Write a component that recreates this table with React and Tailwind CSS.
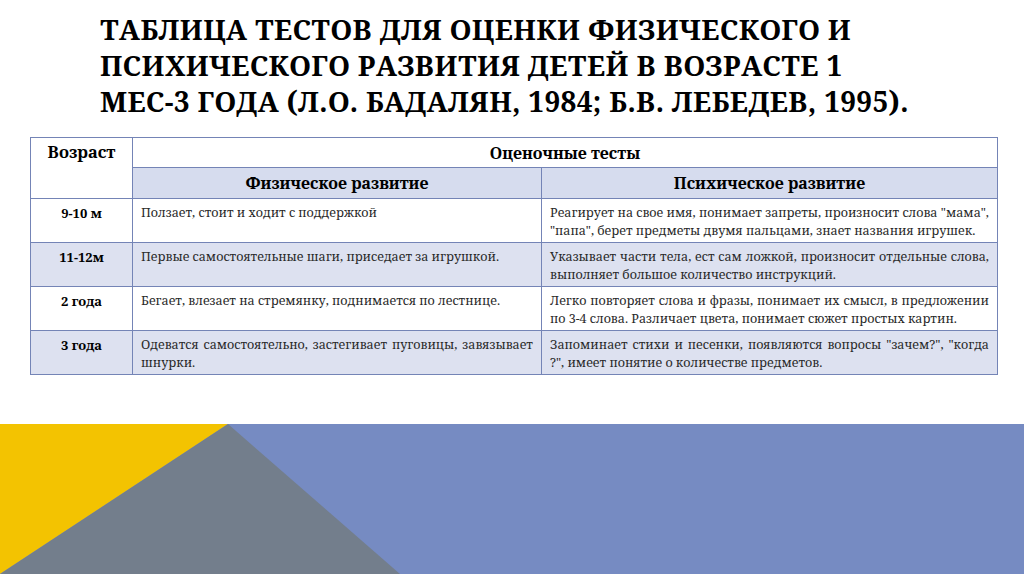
export default function App() {
  const rows = [
    {
      age: "9-10 м",
      phys: "Ползает, стоит и ходит с поддержкой",
      psych: 'Реагирует на свое имя, понимает запреты, произносит слова "мама", "папа", берет предметы двумя пальцами, знает названия игрушек.',
      shade: false,
    },
    {
      age: "11-12м",
      phys: "Первые самостоятельные шаги, приседает за игрушкой.",
      psych: "Указывает части тела, ест сам ложкой, произносит отдельные слова, выполняет большое количество инструкций.",
      shade: true,
    },
    {
      age: "2 года",
      phys: "Бегает, влезает на стремянку, поднимается по лестнице.",
      psych: "Легко повторяет слова и фразы, понимает их смысл, в предложении по 3-4 слова. Различает цвета, понимает сюжет простых картин.",
      shade: false,
    },
    {
      age: "3 года",
      phys: "Одеватся самостоятельно, застегивает пуговицы, завязывает шнурки.",
      psych: 'Запоминает стихи и песенки, появляются вопросы "зачем?", "когда ?", имеет понятие о количестве предметов.',
      shade: true,
    },
  ];
  const bd = "border border-[#7484b6]";
  return (
    <div
      className="w-[1024px] h-[574px] bg-white overflow-hidden flex flex-col text-black"
      style={{ fontFamily: '"Noto Serif", "DejaVu Serif", serif' }}
    >
      <div className="pl-[100px] pt-[11px] h-[137px]">
        <h1 className="text-[28px] leading-[36px] font-bold uppercase tracking-[0.3px]">
          Таблица тестов для оценки физического и
          <br />
          психического развития детей в возрасте 1
          <br />
          мес-3 года (Л.О. Бадалян, 1984; Б.В. Лебедев, 1995).
        </h1>
      </div>
      <div className="pl-[30px]">
        <table className="border-collapse w-[967px] table-fixed">
          <colgroup>
            <col className="w-[102px]" />
            <col className="w-[409px]" />
            <col className="w-[456px]" />
          </colgroup>
          <thead>
            <tr className="h-[30px]">
              <th rowSpan={2} className={`${bd} font-bold align-top pt-[4px] text-[16.5px] leading-[20px] bg-white`}>
                Возраст
              </th>
              <th colSpan={2} className={`${bd} font-bold text-[16px] leading-[20px] bg-white`}>
                Оценочные тесты
              </th>
            </tr>
            <tr className="h-[31px]">
              <th className={`${bd} font-bold text-[16px] leading-[20px] bg-[#d6dcee]`}>Физическое развитие</th>
              <th className={`${bd} font-bold text-[16px] leading-[20px] bg-[#d6dcee]`}>Психическое развитие</th>
            </tr>
          </thead>
          <tbody>
            {rows.map((r, i) => (
              <tr key={i} className={`h-[44px] ${r.shade ? "bg-[#dde1f0]" : "bg-white"}`}>
                <td className={`${bd} font-bold align-top text-center text-[13px] leading-[18px] pt-[5px]`}>
                  {r.age}
                </td>
                <td className={`${bd} align-top text-justify text-[12.5px] leading-[18px] pt-[5px] pb-[2px] px-[8px] text-[#2a2a2a]`}>
                  {r.phys}
                </td>
                <td className={`${bd} align-top text-justify text-[12.5px] leading-[18px] pt-[5px] pb-[2px] px-[8px] text-[#2a2a2a]`}>
                  {r.psych}
                </td>
              </tr>
            ))}
          </tbody>
        </table>
      </div>
      <div className="flex-1" />
      <div className="h-[150px] w-full">
        <svg width="1024" height="150" viewBox="0 0 1024 150" className="block">
          <rect x="0" y="0" width="1024" height="150" fill="#768bc2" />
          <polygon points="0,0 228,0 0,150" fill="#f3c301" />
          <polygon points="228,0 400,150 0,150" fill="#737e8c" />
        </svg>
      </div>
    </div>
  );
}
